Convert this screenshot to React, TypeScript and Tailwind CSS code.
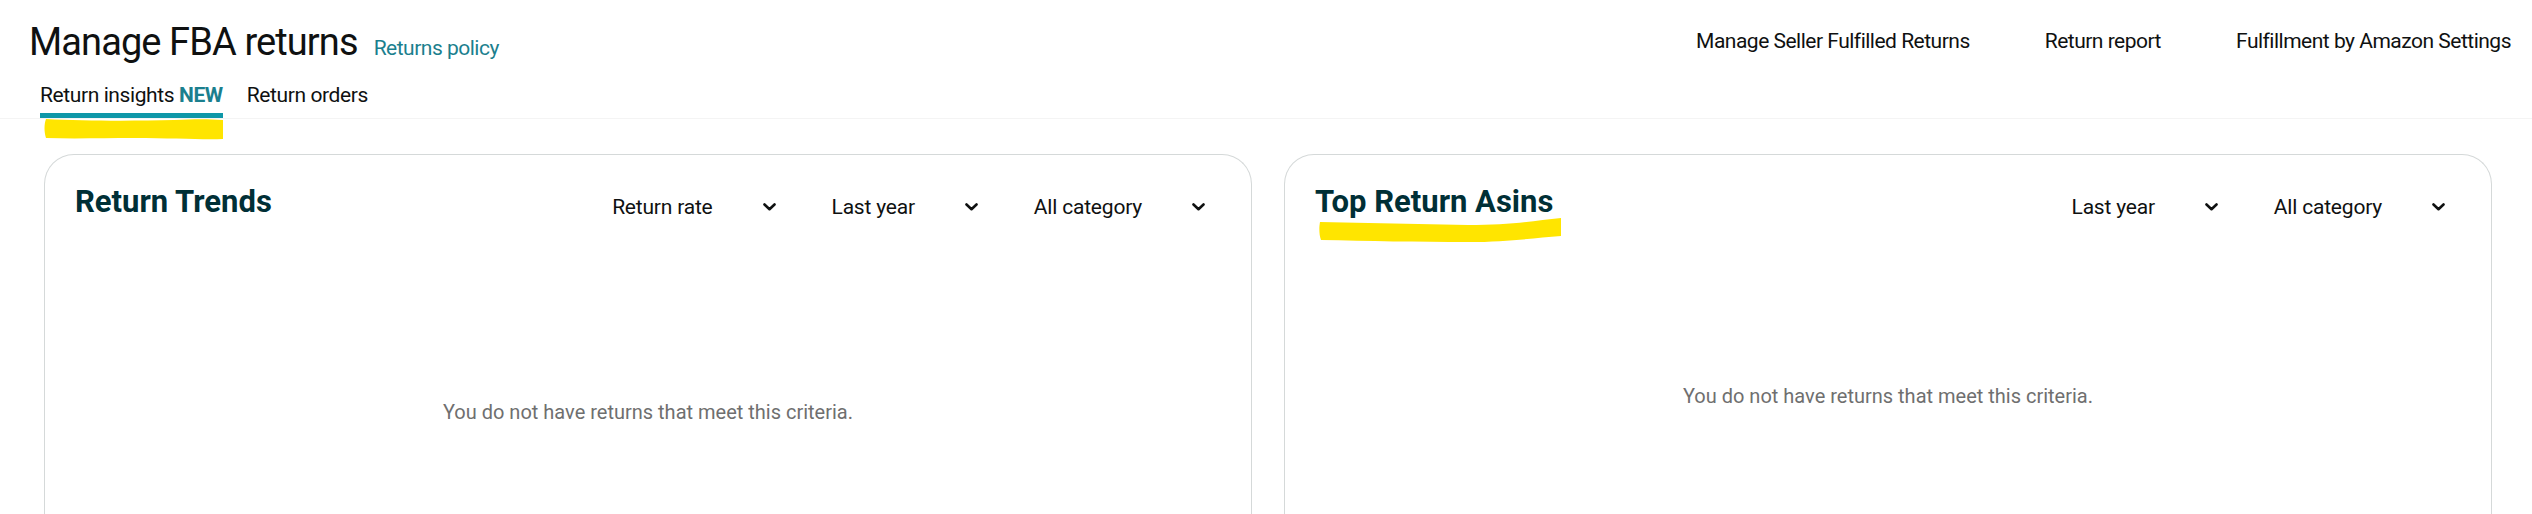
const font = { fontFamily: "Roboto, 'Liberation Sans', sans-serif" };

function Chevron() {
  return (
    <svg width="13" height="8" viewBox="0 0 13 8" fill="none" className="shrink-0">
      <path d="M1.5 1.5 L6.5 6.2 L11.5 1.5" stroke="#0f1111" strokeWidth="2.6" strokeLinecap="round" strokeLinejoin="round" />
    </svg>
  );
}

function Dropdown({ label }: { label: string }) {
  return (
    <button className="flex items-center text-[21px] leading-6 tracking-[-0.2px] text-[#0f1111]">
      <span>{label}</span>
      <span className="ml-[50px]">
        <Chevron />
      </span>
    </button>
  );
}

function Marker({ className, d, w, h }: { className: string; d: string; w: number; h: number }) {
  return (
    <svg className={className} width={w} height={h} viewBox={`0 0 ${w} ${h}`} aria-hidden>
      <path d={d} fill="#ffe500" />
    </svg>
  );
}

function Card({
  title,
  filters,
  highlight,
  emptyTop,
}: {
  title: string;
  filters: string[];
  highlight?: boolean;
  emptyTop: string;
}) {
  return (
    <div className="h-[420px] rounded-t-[30px] border border-b-0 border-[#d5d9d9] bg-white pt-[28px]">
      <div className="flex items-start justify-between pl-[30px] pr-[46px]">
        <h2 className="relative text-[31px] font-bold leading-[38px] text-[#002f36]">
          {title}
          {highlight && (
            <Marker
              className="absolute left-[3px] top-[34px]"
              w={244}
              h={26}
              d="M2 5 C50 6 100 7 150 8 C190 8 215 4 243 1 L243 19 C215 21 190 25 150 25 C100 25 50 24 3 23 C1 18 1 10 2 5 Z"
            />
          )}
        </h2>
        <div className="mt-[12px] flex items-center gap-[56px]">
          {filters.map((f) => (
            <Dropdown key={f} label={f} />
          ))}
        </div>
      </div>
      <p className={`${emptyTop} text-center text-[20px] text-[#6f6f6f]`}>
        You do not have returns that meet this criteria.
      </p>
    </div>
  );
}

export default function App() {
  return (
    <div className="h-[514px] w-full overflow-hidden bg-white" style={font}>
      <div className="flex items-center justify-between pl-[29px] pr-[21px] pt-[18px]">
        <div className="flex items-baseline gap-[16px]">
          <h1 className="text-[38px] leading-[48px] tracking-[-0.9px] text-[#0f1111]">Manage FBA returns</h1>
          <a className="text-[21px] tracking-[-0.5px] text-[#1b7f8e]">Returns policy</a>
        </div>
        <div className="flex items-center gap-[75px] text-[21px] tracking-[-0.5px] text-[#0f1111]">
          <a>Manage Seller Fulfilled Returns</a>
          <a>Return report</a>
          <a>Fulfillment by Amazon Settings</a>
        </div>
      </div>

      <div className="mt-[17px] flex gap-[24px] border-b border-[#f4f4f4] pl-[40px]">
        <div className="relative border-b-[5px] border-[#0e97a8] pb-[6px] text-[21px] leading-6 tracking-[-0.4px] text-[#0f1111]">
          Return insights <span className="font-bold text-[#1b7f8e]">NEW</span>
          <Marker
            className="absolute left-[4px] top-[34px]"
            w={180}
            h={24}
            d="M2 2 C40 4 90 4 130 3 C150 2 165 2 179 3 L179 22 C160 23 130 21 90 21 C60 21 30 22 2 21 C0 15 0 7 2 2 Z"
          />
        </div>
        <div className="text-[21px] leading-6 tracking-[-0.4px] text-[#0f1111]">Return orders</div>
      </div>

      <div className="mt-[35px] grid grid-cols-2 gap-[32px] pl-[44px] pr-[40px]">
        <Card title="Return Trends" filters={["Return rate", "Last year", "All category"]} emptyTop="mt-[176px]" />
        <Card title="Top Return Asins" filters={["Last year", "All category"]} highlight emptyTop="mt-[160px]" />
      </div>
    </div>
  );
}
